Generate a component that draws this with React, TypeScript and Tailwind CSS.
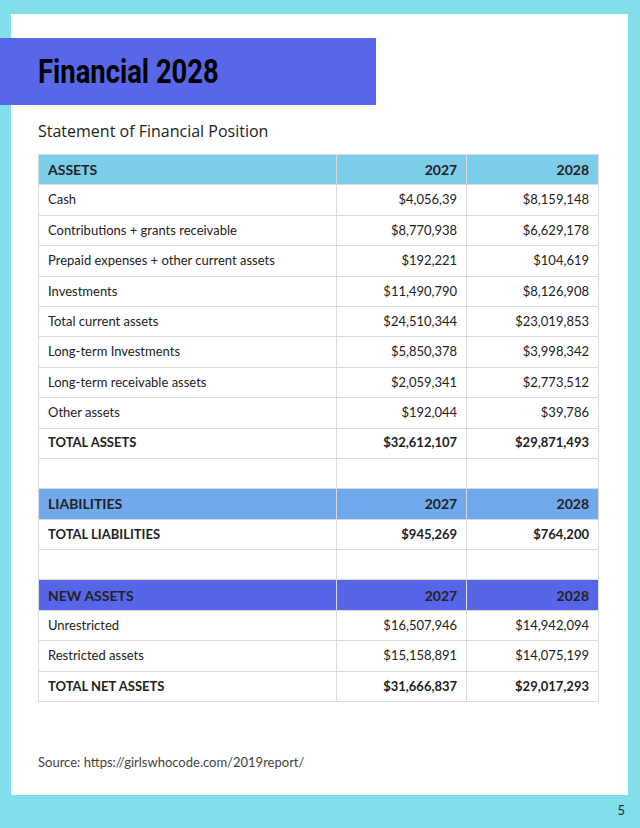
import React from 'react';

type Row = { label: string; a?: string; b?: string; bold?: boolean; head?: string; blank?: boolean };

const rows: Row[] = [
  { label: 'ASSETS', a: '2027', b: '2028', head: 'bg-[#7ccdea]' },
  { label: 'Cash', a: '$4,056,39', b: '$8,159,148' },
  { label: 'Contributions + grants receivable', a: '$8,770,938', b: '$6,629,178' },
  { label: 'Prepaid expenses + other current assets', a: '$192,221', b: '$104,619' },
  { label: 'Investments', a: '$11,490,790', b: '$8,126,908' },
  { label: 'Total current assets', a: '$24,510,344', b: '$23,019,853' },
  { label: 'Long-term Investments', a: '$5,850,378', b: '$3,998,342' },
  { label: 'Long-term receivable assets', a: '$2,059,341', b: '$2,773,512' },
  { label: 'Other assets', a: '$192,044', b: '$39,786' },
  { label: 'TOTAL ASSETS', a: '$32,612,107', b: '$29,871,493', bold: true },
  { label: '', blank: true },
  { label: 'LIABILITIES', a: '2027', b: '2028', head: 'bg-[#71a9ec]' },
  { label: 'TOTAL LIABILITIES', a: '$945,269', b: '$764,200', bold: true },
  { label: '', blank: true },
  { label: 'NEW ASSETS', a: '2027', b: '2028', head: 'bg-[#5766e8]' },
  { label: 'Unrestricted', a: '$16,507,946', b: '$14,942,094' },
  { label: 'Restricted assets', a: '$15,158,891', b: '$14,075,199' },
  { label: 'TOTAL NET ASSETS', a: '$31,666,837', b: '$29,017,293', bold: true },
];

export default function App() {
  return (
    <div className="w-[640px] h-[828px] bg-[#80dfeb] pt-[14px] pl-[11px] relative" style={{ fontFamily: 'Lato, sans-serif' }}>
      <div className="w-[617px] h-[781px] bg-white flex flex-col">
        <div className="mt-[24px] -ml-[11px] w-[376px] h-[67px] bg-[#5767e8] flex items-center pl-[38px]">
          <h1
            className="text-[33px] font-bold text-black leading-none origin-left scale-x-[0.83] whitespace-nowrap"
            style={{ fontFamily: 'Roboto, sans-serif' }}
          >
            Financial 2028
          </h1>
        </div>
        <h2
          className="mt-[16px] ml-[27px] text-[16px] font-medium text-[#222] leading-[20px]"
          style={{ fontFamily: '"Open Sans", sans-serif' }}
        >
          Statement of Financial Position
        </h2>
        <table className="mt-[13px] ml-[27px] w-[561px] border-collapse text-[13px] text-[#222]">
          <colgroup>
            <col className="w-[299px]" />
            <col className="w-[130px]" />
            <col className="w-[132px]" />
          </colgroup>
          <tbody>
            {rows.map((r, i) => (
              <tr key={i} className={`h-[30.4px] ${r.head ?? 'bg-white'}`}>
                <td className={`border border-[#dadada] px-[9px] ${r.head || r.bold ? 'font-bold' : ''} ${r.head ? 'text-[14px]' : ''}`}>
                  {r.label}
                </td>
                <td className={`border border-[#dadada] px-[9px] text-right ${r.head || r.bold ? 'font-bold' : ''} ${r.head ? 'text-[14px]' : ''}`}>
                  {r.a}
                </td>
                <td className={`border border-[#dadada] px-[9px] text-right ${r.head || r.bold ? 'font-bold' : ''} ${r.head ? 'text-[14px]' : ''}`}>
                  {r.b}
                </td>
              </tr>
            ))}
          </tbody>
        </table>
        <p className="mt-[51px] ml-[27px] text-[13px] text-[#444]">Source: https://girlswhocode.com/2019report/</p>
      </div>
      <span className="absolute right-[15px] top-[801px] text-[13px] text-[#1a2b33]">5</span>
    </div>
  );
}
